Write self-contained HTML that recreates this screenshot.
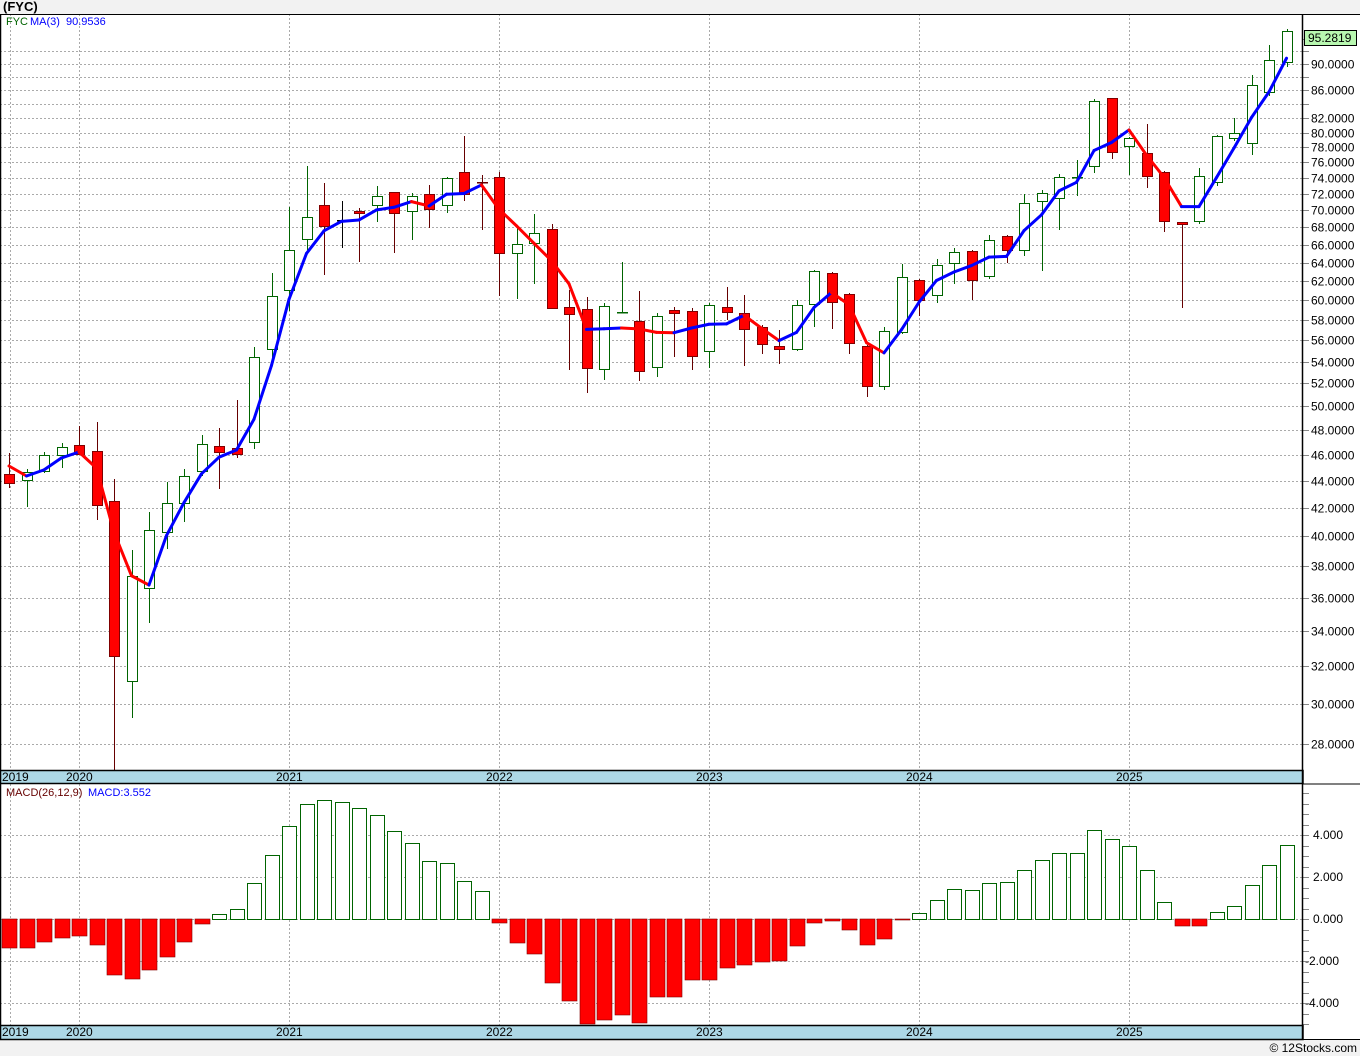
<!DOCTYPE html>
<html><head><meta charset="utf-8"><style>
html,body{margin:0;padding:0;background:#f2f2f2;}
svg{display:block;font-family:"Liberation Sans",sans-serif;}
</style></head><body>
<svg id="s" width="1360" height="1056" xmlns="http://www.w3.org/2000/svg">
<rect x="0" y="0" width="1360" height="1056" fill="#f2f2f2"/>
<rect x="0" y="14" width="1360" height="1025" fill="#fff"/>
<text x="3" y="11" font-size="13" font-weight="bold" fill="#000">(FYC)</text>
<g id="g"></g>
</svg>
<script>
var NS="http://www.w3.org/2000/svg",G=document.getElementById("g");
function el(t,a,txt){var e=document.createElementNS(NS,t);for(var k in a)e.setAttribute(k,a[k]);if(txt!=null)e.textContent=txt;G.appendChild(e);return e;}
function Y(p){return 64+582.4*Math.log(90/p);}
function P(y){return 90/Math.exp((y-64)/582.4);}
var years=[[10,"2019"],[79,"2020"],[289,"2021"],[499,"2022"],[709,"2023"],[919,"2024"],[1129,"2025"]];
var labs=[90,86,82,80,78,76,74,72,70,68,66,64,62,60,58,56,54,52,50,48,46,44,42,40,38,36,34,32,30,28];
var ticks=[94,92,90,88,86,84,82,80,78,76,74,72,70,68,66,64,62,60,58,56,54,52,50,48,46,44,42,40,38,36,34,32,30,28];
ticks.forEach(function(p){var y=Math.round(Y(p))+.5;
 if(labs.indexOf(p)>=0||p==92||p==88||p==84) el("line",{x1:0,x2:1303,y1:y,y2:y,stroke:"#aaa","stroke-dasharray":"2,2"});
 el("line",{x1:1303,x2:1309,y1:y,y2:y,stroke:"#888"});
 if(labs.indexOf(p)>=0) el("text",{x:1311,y:y+4,"font-size":12,fill:"#000"},p.toFixed(4));
});
[[835,"4.000"],[877,"2.000"],[919,"0.000"],[961,"-2.000"],[1003,"-4.000"]].forEach(function(a){
 el("line",{x1:0,x2:1303,y1:a[0]+.5,y2:a[0]+.5,stroke:"#aaa","stroke-dasharray":"2,2"});
 el("text",{x:a[1][0]=="-"?1305:1313,y:a[0]+4,"font-size":12,fill:"#000"},a[1]);});
for(var y=793;y<1025;y+=10.5) el("line",{x1:1303,x2:1309,y1:Math.round(y)+.5,y2:Math.round(y)+.5,stroke:"#888"});
years.forEach(function(a){el("line",{x1:a[0]+.5,x2:a[0]+.5,y1:14,y2:770,stroke:"#aaa","stroke-dasharray":"2,2"});
 el("line",{x1:a[0]+.5,x2:a[0]+.5,y1:784,y2:1025,stroke:"#aaa","stroke-dasharray":"2,2"});});
var C=[[9,474,483,453,488,0],[26.5,472,480,469,507,1],[44,455,471,452,473,1],[61.5,447,455,443,468,1],[79,445,454,426,455,0],[96.5,451,505,422,520,0],[114,501,656,479,770,0],[131.5,576,681,550,718,1],[149,530,588,512,623,1],[166.5,503,532,482,549,1],[184,476,503,469,522,1],[201.5,444,471,435,476,1],[219,446,452,428,489,0],[236.5,448,454,400,458,0],[254,357,442,347,449,1],[271.5,296,349,273,362,1],[289,250,290,207,311,1],[306.5,217,239,166,250,1],[324,205,226,183,275,0],[341.5,220,221,201,248,2],[359,211,213,208,262,0],[376.5,196,205,186,222,1],[394,192,213,192,253,0],[411.5,196,211,193,240,1],[429,194,209,185,228,0],[446.5,178,205,177,213,1],[464,172,194,136,201,0],[481.5,182,183,175,230,0],[499,177,253,172,296,0],[516.5,244,253,228,299,1],[534,233,243,214,284,1],[551.5,229,308,224,309,0],[569,307,314,290,370,0],[586.5,309,368,297,393,0],[604,306,369,303,380,1],[621.5,312,313,262,313,1],[639,321,371,291,381,0],[656.5,316,367,313,377,1],[674,310,313,307,357,0],[691.5,311,356,308,370,0],[709,305,351,303,368,1],[726.5,307,312,287,320,0],[744,313,329,295,366,0],[761.5,327,344,325,354,0],[779,346,349,330,364,0],[796.5,305,349,300,351,1],[814,271,304,270,327,1],[831.5,273,302,272,329,0],[849,294,343,293,354,0],[866.5,346,386,345,397,0],[884,331,386,327,390,1],[901.5,277,332,264,334,1],[919,280,300,279,316,0],[936.5,265,295,259,303,1],[954,252,263,248,284,1],[971.5,251,280,250,300,0],[989,240,276,235,279,1],[1006.5,236,250,235,263,0],[1024,203,250,194,256,1],[1041.5,193,201,190,271,1],[1059,177,198,174,230,1],[1076.5,177,178,160,196,1],[1094,101,166,99,173,1],[1111.5,98,152,98,159,0],[1129,138,146,137,175,1],[1146.5,153,176,124,188,0],[1164,172,221,171,232,0],[1181.5,222,224,222,308,0],[1199,176,221,168,224,1],[1216.5,136,182,135,186,1],[1234,133,138,118,141,1],[1251.5,85,143,75,155,1],[1269,60,92,45,96,1],[1286.5,31,62,29,67,1]];
var closes=[];
C.forEach(function(c){var up=c[5]==1,dj=c[5]==2;var col=up?"#006400":(dj?"#000":"#600");
 closes.push(P(up?c[1]:c[2]));
 el("line",{x1:Math.round(c[0])+.5,x2:Math.round(c[0])+.5,y1:c[3],y2:c[4],stroke:col,"stroke-width":1});
 var h=Math.max(c[2]-c[1],1);
 if(dj||h<=1.5) el("rect",{x:Math.round(c[0])-5,y:c[1],width:11,height:1.5,fill:col});
 else el("rect",{x:Math.round(c[0])-5+.5,y:c[1]+.5,width:10,height:h,fill:up?"#fff":"#f00",stroke:up?"#006400":"#800000","stroke-width":1});
});
var pts=[[9,466],[26.5,476]];
for(var i=2;i<C.length;i++){var m=(closes[i]+closes[i-1]+closes[i-2])/3;pts.push([C[i][0],Y(m)]);}
for(var i=1;i<pts.length;i++){var a=pts[i-1],b=pts[i];
 el("line",{x1:a[0],y1:a[1],x2:b[0],y2:b[1],stroke:b[1]>a[1]+0.3?"#f00":"#00f","stroke-width":3,"stroke-linecap":"round"});}
var M=[[9,948],[26.5,948],[44,942],[61.5,938],[79,936],[96.5,945],[114,975],[131.5,979],[149,970],[166.5,957],[184,942],[201.5,924],[219,914],[236.5,909],[254,883],[271.5,855],[289,826],[306.5,804],[324,800],[341.5,802],[359,808],[376.5,815],[394,831],[411.5,843],[429,861],[446.5,863],[464,881],[481.5,891],[499,923],[516.5,943],[534,954],[551.5,983],[569,1001],[586.5,1024],[604,1020],[621.5,1015],[639,1023],[656.5,997],[674,997],[691.5,980],[709,980],[726.5,968],[744,965],[761.5,962],[779,961],[796.5,946],[814,923],[831.5,921],[849,930],[866.5,945],[884,939],[901.5,920],[919,913],[936.5,900],[954,889],[971.5,890],[989,883],[1006.5,882],[1024,870],[1041.5,860],[1059,853],[1076.5,853],[1094,830],[1111.5,839],[1129,846],[1146.5,870],[1164,902],[1181.5,926],[1199,926],[1216.5,912],[1234,906],[1251.5,885],[1269,865],[1286.5,845]];
M.forEach(function(m){var x=Math.round(m[0])-7;
 if(m[1]<919) el("rect",{x:x+.5,y:m[1]+.5,width:14,height:919-m[1],fill:"#fff",stroke:"#006400"});
 else el("rect",{x:x,y:919,width:15,height:m[1]-919,fill:"#f00",stroke:"#800000","stroke-width":0.6});
});
[[770,783],[1025,1039]].forEach(function(b){
 el("rect",{x:0,y:b[0]+.5,width:1303,height:b[1]-b[0],fill:"#add8e6",stroke:"#000","stroke-width":1.5});
 years.forEach(function(a){el("text",{x:a[1]=="2019"?2:a[0]-13,y:b[0]+11,"font-size":12,fill:"#000"},a[1]);});
});
el("line",{x1:1302.5,x2:1302.5,y1:14,y2:1039,stroke:"#000","stroke-width":1.5});
el("line",{x1:0.5,x2:0.5,y1:14,y2:1039,stroke:"#000","stroke-width":1.5});
el("line",{x1:0,x2:1360,y1:14.5,y2:14.5,stroke:"#000"});
el("line",{x1:1303,x2:1360,y1:784,y2:784,stroke:"#000"});
el("line",{x1:0,x2:1360,y1:1039.5,y2:1039.5,stroke:"#000"});
el("rect",{x:1304.5,y:30.5,width:52,height:15,fill:"#b8f7b0",stroke:"#000"});
el("text",{x:1308,y:42,"font-size":12,fill:"#000"},"95.2819");
el("text",{x:6,y:25,"font-size":11,fill:"#006400"},"FYC");
el("text",{x:30,y:25,"font-size":11,fill:"#00f"},"MA(3)");
el("text",{x:66,y:25,"font-size":11,fill:"#00f"},"90.9536");
el("text",{x:6,y:796,"font-size":11,fill:"#600"},"MACD(26,12,9)");
el("text",{x:88,y:796,"font-size":11,fill:"#00f"},"MACD:3.552");
el("text",{x:1357,y:1052,"font-size":12,fill:"#000","text-anchor":"end"},"© 12Stocks.com");
</script>
</body></html>
